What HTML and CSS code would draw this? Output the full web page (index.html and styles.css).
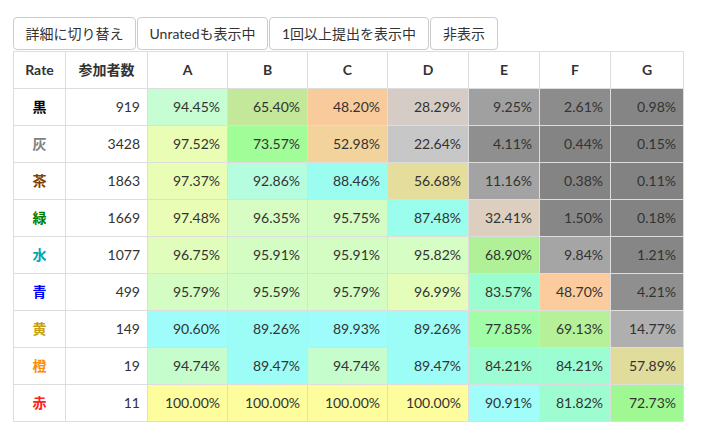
FILE: index.html
```html
<!DOCTYPE html>
<html lang="ja">
<head>
<meta charset="utf-8">
<link rel="stylesheet" href="styles.css">
</head>
<body>
<div class="page">
  <div class="toolbar">
    <button class="btn">詳細に切り替え</button>
    <button class="btn">Unratedも表示中</button>
    <button class="btn">1回以上提出を表示中</button>
    <button class="btn">非表示</button>
  </div>
  <table class="stats">
    <colgroup>
      <col class="c-rate"><col class="c-num"><col class="c-a"><col class="c-a"><col class="c-a"><col class="c-d"><col class="c-e"><col class="c-e"><col class="c-g">
    </colgroup>
    <thead>
      <tr><th>Rate</th><th>参加者数</th><th>A</th><th>B</th><th>C</th><th>D</th><th>E</th><th>F</th><th>G</th></tr>
    </thead>
    <tbody>
      <tr><td class="rate r-black">黒</td><td class="num">919</td>
        <td class="p" style="background:#c6fdd2">94.45%</td><td class="p" style="background:#c3e89a">65.40%</td><td class="p" style="background:#f9cb9c">48.20%</td><td class="p" style="background:#d5ccc6">28.29%</td><td class="p" style="background:#a0a0a0">9.25%</td><td class="p" style="background:#8c8c8c">2.61%</td><td class="p" style="background:#858585">0.98%</td></tr>
      <tr><td class="rate r-gray">灰</td><td class="num">3428</td>
        <td class="p" style="background:#e9fdb4">97.52%</td><td class="p" style="background:#a0fd98">73.57%</td><td class="p" style="background:#f3d39c">52.98%</td><td class="p" style="background:#c7c7c7">22.64%</td><td class="p" style="background:#8f8f8f">4.11%</td><td class="p" style="background:#848484">0.44%</td><td class="p" style="background:#828282">0.15%</td></tr>
      <tr><td class="rate r-brown">茶</td><td class="num">1863</td>
        <td class="p" style="background:#e9fdb4">97.37%</td><td class="p" style="background:#b6fde0">92.86%</td><td class="p" style="background:#9bfdf0">88.46%</td><td class="p" style="background:#e4dd9b">56.68%</td><td class="p" style="background:#a3a3a3">11.16%</td><td class="p" style="background:#848484">0.38%</td><td class="p" style="background:#828282">0.11%</td></tr>
      <tr><td class="rate r-green">緑</td><td class="num">1669</td>
        <td class="p" style="background:#e9fdb6">97.48%</td><td class="p" style="background:#d8fdc4">96.35%</td><td class="p" style="background:#d4fdc4">95.75%</td><td class="p" style="background:#9bfdec">87.48%</td><td class="p" style="background:#dccfc0">32.41%</td><td class="p" style="background:#878787">1.50%</td><td class="p" style="background:#838383">0.18%</td></tr>
      <tr><td class="rate r-cyan">水</td><td class="num">1077</td>
        <td class="p" style="background:#e0fdbc">96.75%</td><td class="p" style="background:#d4fdc4">95.91%</td><td class="p" style="background:#d4fdc4">95.91%</td><td class="p" style="background:#d6fdc4">95.82%</td><td class="p" style="background:#b0f096">68.90%</td><td class="p" style="background:#a5a5a5">9.84%</td><td class="p" style="background:#868686">1.21%</td></tr>
      <tr><td class="rate r-blue">青</td><td class="num">499</td>
        <td class="p" style="background:#d4fdc4">95.79%</td><td class="p" style="background:#d2fdc4">95.59%</td><td class="p" style="background:#d4fdc4">95.79%</td><td class="p" style="background:#e4fdb8">96.99%</td><td class="p" style="background:#9bfdd0">83.57%</td><td class="p" style="background:#fccc9e">48.70%</td><td class="p" style="background:#8f8f8f">4.21%</td></tr>
      <tr><td class="rate r-yellow">黄</td><td class="num">149</td>
        <td class="p" style="background:#9efdfa">90.60%</td><td class="p" style="background:#9cfdf7">89.26%</td><td class="p" style="background:#9efdfa">89.93%</td><td class="p" style="background:#9cfdf7">89.26%</td><td class="p" style="background:#a2fda8">77.85%</td><td class="p" style="background:#b6f098">69.13%</td><td class="p" style="background:#afafaf">14.77%</td></tr>
      <tr><td class="rate r-orange">橙</td><td class="num">19</td>
        <td class="p" style="background:#c6fdcc">94.74%</td><td class="p" style="background:#9cfdf7">89.47%</td><td class="p" style="background:#c6fdcc">94.74%</td><td class="p" style="background:#9cfdf7">89.47%</td><td class="p" style="background:#9dfdd2">84.21%</td><td class="p" style="background:#9dfdd2">84.21%</td><td class="p" style="background:#e0dc9c">57.89%</td></tr>
      <tr><td class="rate r-red">赤</td><td class="num">11</td>
        <td class="p" style="background:#fdfd9e">100.00%</td><td class="p" style="background:#fdfd9e">100.00%</td><td class="p" style="background:#fdfd9e">100.00%</td><td class="p" style="background:#fdfd9e">100.00%</td><td class="p" style="background:#a0fdfa">90.91%</td><td class="p" style="background:#9dfdd0">81.82%</td><td class="p" style="background:#a0f893">72.73%</td></tr>
    </tbody>
  </table>
</div>
</body>
</html>
```
FILE: styles.css
```css
* { box-sizing: border-box; }
html, body { margin: 0; padding: 0; background: #fff; }
body {
  font-family: Lato, "Noto Sans CJK JP", sans-serif;
  font-size: 14px;
  line-height: 20px;
  color: #333;
}
.page { padding: 17px 13px 0 13px; }
.toolbar { display: flex; gap: 1px; }
.btn {
  font-family: Lato, "Noto Sans CJK JP", sans-serif;
  font-size: 14px;
  line-height: 20px;
  color: #333;
  background: #fff;
  border: 1px solid #ccc;
  border-radius: 4px;
  height: 33px;
  padding: 5px 11px;
  margin: 0;
}
.toolbar .btn:nth-child(1) { width: 123px; }
.toolbar .btn:nth-child(2) { width: 131px; }
.toolbar .btn:nth-child(3) { width: 160px; }
.toolbar .btn:nth-child(4) { width: 68px; }
.stats {
  border-collapse: collapse;
  table-layout: fixed;
  width: 670px;
  margin-top: 1px;
  border: 1px solid #ddd;
}
.c-rate { width: 52px; }
.c-num { width: 82px; }
.c-a { width: 80px; }
.c-d { width: 81px; }
.c-e { width: 71px; }
.c-g { width: 73px; }
.stats th, .stats td {
  border: 1px solid #ddd;
  padding: 8px 7px;
  height: 37px;
  white-space: nowrap;
}
.stats th { font-weight: bold; text-align: center; }
.stats td.num, .stats td.p { text-align: right; }
.stats td.rate { text-align: center; font-weight: bold; }
.r-black { color: #000; }
.r-gray { color: #808080; }
.r-brown { color: #804000; }
.r-green { color: #008000; }
.r-cyan { color: #00a8b0; }
.r-blue { color: #0000ff; }
.r-yellow { color: #c8a010; }
.r-orange { color: #ff8c00; }
.r-red { color: #ff2020; }
```
